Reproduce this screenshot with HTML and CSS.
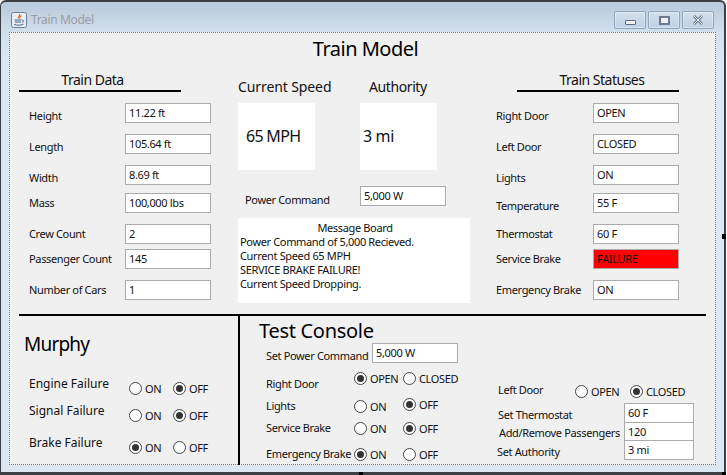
FILE: index.html
```html
<!DOCTYPE html>
<html lang="en">
<head>
    <meta charset="UTF-8">
    <meta name="viewport" content="width=device-width, initial-scale=1.0">
    <title>Train Model</title>
    <link rel="stylesheet" href="styles.css">
</head>
<body>
    <div class="window">
        <div class="titlebar">
            <svg class="app-icon" viewBox="0 0 16 16">
                <rect x="0.5" y="0.5" width="15" height="15" rx="2" fill="#e8eef5" stroke="#6f7f92"/>
                <path d="M8.5 2c1 1.500-2 2.500-1 4.500M10.500 3.500c-1 1-2.500 1.500-1.500 3" fill="none" stroke="#d9651c" stroke-width="1.200"/>
                <path d="M3.500 8h7M4 10h6M3 12.500c3 1 7 1 9.500-.5M11 8c2 0 2 2 0 2.500" fill="none" stroke="#3f6690" stroke-width="1"/>
            </svg>
            <span class="window-title">Train Model</span>
            <div class="window-buttons">
                <div class="win-btn"><span class="glyph-min"></span></div>
                <div class="win-btn"><span class="glyph-max"></span></div>
                <div class="win-btn">
                    <svg class="glyph-close" viewBox="0 0 12 10">
                        <path d="M2 1l8 8M10 1l-8 8" fill="none" stroke="#6a7889" stroke-width="2.600"/>
                        <path d="M2 1l8 8M10 1l-8 8" fill="none" stroke="#f2f5f8" stroke-width="1"/>
                    </svg>
                </div>
            </div>
        </div>

        <div class="panel">
            <h1 class="main-title">Train Model</h1>

            <div class="top">
                <section class="side side-left">
                    <h2 class="side-title">Train Data</h2>
                    <div class="rows">
                        <div class="row"><span class="label low">Height</span><span class="field">11.22 ft</span></div>
                        <div class="row"><span class="label low">Length</span><span class="field">105.64 ft</span></div>
                        <div class="row"><span class="label low">Width</span><span class="field">8.69 ft</span></div>
                        <div class="row"><span class="label">Mass</span><span class="field">100,000 lbs</span></div>
                        <div class="row"><span class="label">Crew Count</span><span class="field">2</span></div>
                        <div class="row"><span class="label">Passenger Count</span><span class="field">145</span></div>
                        <div class="row"><span class="label">Number of Cars</span><span class="field">1</span></div>
                    </div>
                </section>

                <section class="center">
                    <div class="readouts">
                        <div class="readout">
                            <div class="readout-title">Current Speed</div>
                            <div class="readout-box speed">65 MPH</div>
                        </div>
                        <div class="readout">
                            <div class="readout-title authority">Authority</div>
                            <div class="readout-box small-pad">3 mi</div>
                        </div>
                    </div>
                    <div class="power">
                        <span class="power-label">Power Command</span>
                        <span class="field">5,000 W</span>
                    </div>
                    <div class="messages">
                        <div class="messages-title">Message Board</div>
                        <div>Power Command of 5,000 Recieved.</div>
                        <div>Current Speed 65 MPH</div>
                        <div>SERVICE BRAKE FAILURE!</div>
                        <div>Current Speed Dropping.</div>
                    </div>
                </section>

                <section class="side side-right">
                    <h2 class="side-title">Train Statuses</h2>
                    <div class="rows">
                        <div class="row"><span class="label low">Right Door</span><span class="field">OPEN</span></div>
                        <div class="row"><span class="label low">Left Door</span><span class="field">CLOSED</span></div>
                        <div class="row"><span class="label low">Lights</span><span class="field">ON</span></div>
                        <div class="row"><span class="label low">Temperature</span><span class="field">55 F</span></div>
                        <div class="row"><span class="label">Thermostat</span><span class="field">60 F</span></div>
                        <div class="row"><span class="label">Service Brake</span><span class="field failure">FAILURE</span></div>
                        <div class="row"><span class="label">Emergency Brake</span><span class="field">ON</span></div>
                    </div>
                </section>
            </div>

            <div class="bottom">
                <section class="murphy">
                    <h2 class="big-title murphy-title">Murphy</h2>
                    <div class="murphy-row murphy-engine">
                        <span class="murphy-label">Engine Failure</span>
                        <label class="opt opt-on"><span class="radio"></span>ON</label>
                        <label class="opt"><span class="radio checked"></span>OFF</label>
                    </div>
                    <div class="murphy-row murphy-signal">
                        <span class="murphy-label">Signal Failure</span>
                        <label class="opt opt-on"><span class="radio"></span>ON</label>
                        <label class="opt"><span class="radio checked"></span>OFF</label>
                    </div>
                    <div class="murphy-row murphy-brake">
                        <span class="murphy-label">Brake Failure</span>
                        <label class="opt opt-on"><span class="radio checked"></span>ON</label>
                        <label class="opt"><span class="radio"></span>OFF</label>
                    </div>
                </section>

                <section class="console">
                    <div class="console-left">
                        <h2 class="big-title console-title">Test Console</h2>
                        <div class="set-power">
                            <span class="set-power-label">Set Power Command</span>
                            <span class="field">5,000 W</span>
                        </div>
                        <div class="console-row row-right-door">
                            <span class="console-label lower">Right Door</span>
                            <label class="opt opt-wide raised"><span class="radio checked"></span>OPEN</label>
                            <label class="opt raised"><span class="radio"></span>CLOSED</label>
                        </div>
                        <div class="console-row">
                            <span class="console-label">Lights</span>
                            <label class="opt opt-wide"><span class="radio"></span>ON</label>
                            <label class="opt raised-sm"><span class="radio checked"></span>OFF</label>
                        </div>
                        <div class="console-row">
                            <span class="console-label">Service Brake</span>
                            <label class="opt opt-wide"><span class="radio"></span>ON</label>
                            <label class="opt"><span class="radio checked"></span>OFF</label>
                        </div>
                        <div class="console-row row-emergency">
                            <span class="console-label">Emergency Brake</span>
                            <label class="opt opt-wide"><span class="radio checked"></span>ON</label>
                            <label class="opt"><span class="radio"></span>OFF</label>
                        </div>
                    </div>
                    <div class="console-right">
                        <div class="left-door">
                            <span class="left-door-label">Left Door</span>
                            <label class="opt opt-door"><span class="radio"></span>OPEN</label>
                            <label class="opt"><span class="radio checked"></span>CLOSED</label>
                        </div>
                        <div class="settings">
                            <span class="settings-label thermostat-label">Set Thermostat</span><span class="field">60 F</span>
                            <span class="settings-label passengers-label">Add/Remove Passengers</span><span class="field">120</span>
                            <span class="settings-label authority-label">Set Authority</span><span class="field">3 mi</span>
                        </div>
                    </div>
                </section>
            </div>
        </div>

        <span class="handle handle-right"></span>
        <span class="handle handle-bottom"></span>
        <span class="handle handle-corner"></span>
    </div>
</body>
</html>
```

FILE: styles.css
```css
* {
    margin: 0;
    padding: 0;
    box-sizing: border-box;
}

body {
    font-family: "Noto Sans", "DejaVu Sans", sans-serif;
    font-size: 11px;
    letter-spacing: -0.35px;
    color: #111;
    background: #fff;
    overflow: hidden;
}

.window {
    position: relative;
    width: 726px;
    height: 475px;
    padding: 0 8px 7px;
    background: linear-gradient(180deg, #b8c9da 0, #d3e1ee 32px, #dbe7f3 60px);
    border: 1px solid #3c3f44;
    border-width: 2px 2px 3px 1px;
    border-radius: 6px 6px 0 0;
}

.titlebar {
    height: 30px;
    display: flex;
    align-items: flex-start;
    padding-left: 2px;
}

.app-icon {
    width: 16px;
    height: 16px;
    margin-top: 10px;
}

.window-title {
    margin: 9px 0 0 4px;
    font-size: 12px;
    line-height: 18px;
    color: #9a9ea3;
}

.window-buttons {
    display: flex;
    gap: 2px;
    margin: 9px 2px 0 auto;
}

.win-btn {
    width: 32px;
    height: 18px;
    display: flex;
    align-items: center;
    justify-content: center;
    border: 1px solid #8fa5bd;
    border-radius: 2px;
    background: linear-gradient(180deg, #d3e0ec, #bfd1e3);
    box-shadow: inset 0 0 0 1px rgba(255, 255, 255, 0.4);
}

.glyph-min {
    width: 11px;
    height: 5px;
    margin-top: 5px;
    background: #eef2f6;
    border: 1px solid #5f6e82;
    border-radius: 1px;
}

.glyph-max {
    width: 11px;
    height: 9px;
    border: 2px solid #6b7a8d;
    background: #eef2f6;
}

.glyph-close {
    width: 12px;
    height: 10px;
}

.panel {
    height: 433px;
    background: #f0f0f0;
    border: 1px dotted #777;
}

.main-title {
    height: 32px;
    padding-left: 6px;
    text-align: center;
    font-size: 20px;
    font-weight: normal;
    line-height: 32px;
    letter-spacing: -0.5px;
    color: #000;
}

.top {
    display: flex;
    height: 251px;
    border-bottom: 2px solid #000;
    margin: 0 9px;
}

.side {
    width: 162px;
    flex: none;
}

.side-title {
    height: 26px;
    margin-top: 1px;
    padding-top: 4px;
    border-bottom: 2px solid #000;
    font-size: 14px;
    font-weight: normal;
    text-align: center;
    line-height: 20px;
    letter-spacing: -0.5px;
    color: #111;
}

.side-left .side-title {
    padding-right: 15px;
}

.side-right .side-title {
    padding-left: 8px;
}

.side-right {
    margin-left: 47px;
}

.rows {
    display: grid;
    grid-template-rows: 31px 31px 28px 31px 25px 31px 20px;
    margin-top: 11px;
}

.row {
    display: flex;
    align-items: flex-start;
    justify-content: space-between;
}

.side-left .rows {
    width: 192px;
}

.side-left .label {
    margin-left: 10px;
}

.side-right .row {
    margin-left: -21px;
}

.label {
    line-height: 20px;
    white-space: nowrap;
}

.label.low {
    padding-top: 3px;
}

.field {
    display: block;
    width: 86px;
    height: 20px;
    padding-left: 3px;
    line-height: 18px;
    background: #fff;
    border: 1px solid #ababab;
    flex: none;
}

.failure {
    background: #ff0000;
}

.center {
    width: 232px;
    margin-left: 57px;
    flex: none;
}

.readouts {
    display: flex;
    gap: 45px;
}

.readout {
    width: 77px;
}

.readout-title {
    height: 38px;
    padding-top: 12px;
    font-size: 14px;
    line-height: 20px;
    letter-spacing: -0.1px;
    white-space: nowrap;
}

.readout-title.authority {
    padding-left: 9px;
    letter-spacing: -0.4px;
}

.readout-box {
    height: 67px;
    padding-left: 8px;
    background: #fff;
    font-size: 16px;
    line-height: 66px;
    white-space: nowrap;
}

.readout-box.speed {
    letter-spacing: -0.7px;
}

.readout-box.small-pad {
    padding-left: 3px;
}

.power {
    display: flex;
    height: 20px;
    margin-top: 16px;
    justify-content: space-between;
    padding-right: 24px;
}

.power-label {
    padding: 4px 0 0 7px;
    line-height: 20px;
}

.messages {
    height: 85px;
    margin-top: 12px;
    padding: 3px 0 0 2px;
    background: #fff;
    line-height: 14px;
}

.messages-title {
    text-align: center;
}

.bottom {
    display: flex;
    height: 149px;
    margin-left: 9px;
}

.big-title {
    font-size: 20px;
    font-weight: normal;
    line-height: 28px;
    letter-spacing: -0.3px;
    color: #000;
}

.murphy {
    width: 221px;
    padding: 14px 0 0 5px;
    border-right: 2px solid #000;
    flex: none;
}

.murphy-title {
    font-size: 19px;
    letter-spacing: -0.8px;
}

.murphy-row {
    display: flex;
    align-items: flex-start;
    padding-left: 5px;
}

.murphy-engine {
    margin-top: 17px;
}

.murphy-signal {
    margin-top: 7px;
}

.murphy-brake {
    margin-top: 12px;
}

.murphy-label {
    width: 100px;
    font-size: 12px;
    line-height: 18px;
    letter-spacing: 0;
}

.opt {
    display: flex;
    align-items: center;
    gap: 3px;
    line-height: 13px;
    padding-top: 5px;
}

.murphy-row .opt {
    padding-top: 7px;
}

.opt-on {
    width: 44px;
}

.radio {
    width: 13px;
    height: 13px;
    display: flex;
    align-items: center;
    justify-content: center;
    background: #fff;
    border: 1px solid #444;
    border-radius: 50%;
    flex: none;
}

.radio.checked::after {
    content: "";
    width: 7px;
    height: 7px;
    background: #333;
    border-radius: 50%;
}

.console {
    display: flex;
    flex: 1;
}

.console-left {
    width: 240px;
    padding-left: 19px;
    flex: none;
}

.console-title {
    height: 27px;
    padding-top: 1px;
}

.set-power {
    display: flex;
    height: 20px;
    margin-left: 7px;
}

.set-power-label {
    width: 106px;
    padding-top: 3px;
    line-height: 20px;
    white-space: nowrap;
}

.console-row {
    display: flex;
    margin-left: 7px;
    align-items: flex-start;
    height: 22px;
}

.console-label {
    width: 88px;
    line-height: 16px;
    padding-top: 3px;
    white-space: nowrap;
}

.console-label.lower {
    padding-top: 4px;
}

.opt-wide {
    width: 49px;
}

.opt.raised {
    padding-top: 0;
}

.opt.raised-sm {
    padding-top: 3px;
}

.row-right-door {
    margin-top: 9px;
    height: 23px;
}

.row-emergency {
    margin-top: 4px;
}

.console-right {
    width: 200px;
    margin-left: 18px;
    flex: none;
}

.left-door {
    display: flex;
    margin-top: 63px;
}

.left-door-label {
    width: 77px;
    padding-top: 3px;
    line-height: 16px;
}

.opt-door {
    width: 55px;
}

.settings {
    display: grid;
    grid-template-columns: 126px 70px;
    grid-template-rows: 20px 18px 19px;
    margin-top: 5px;
    white-space: nowrap;
}

.settings .field {
    width: 70px;
    height: auto;
    line-height: 17px;
}

.settings .field + .settings-label + .field {
    border-top: 0;
}

.thermostat-label {
    line-height: 24px;
}

.passengers-label {
    padding-left: 1px;
    line-height: 20px;
}

.authority-label {
    margin-left: -1px;
    line-height: 22px;
}

.handle {
    position: absolute;
    background: #000;
    width: 4px;
    height: 5px;
}

.handle-right {
    top: 232px;
    right: -2px;
}

.handle-bottom {
    bottom: -3px;
    left: 358px;
    height: 3px;
}

.handle-corner {
    bottom: -3px;
    right: -2px;
    height: 3px;
}
```
